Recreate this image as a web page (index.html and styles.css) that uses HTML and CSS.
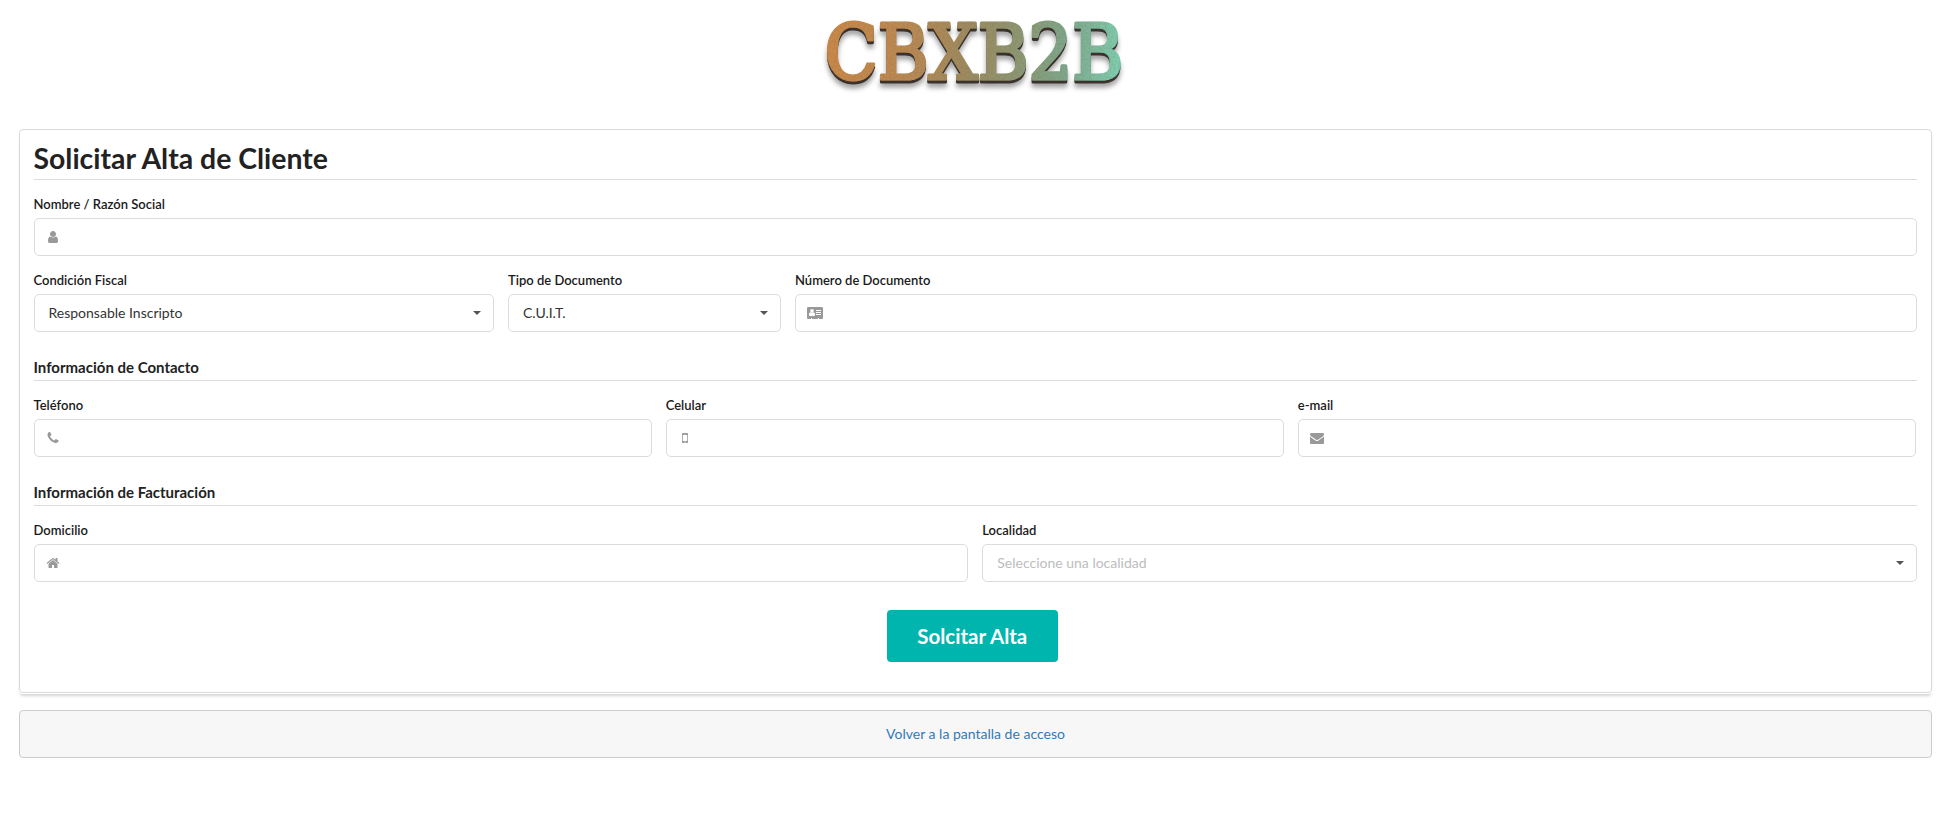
FILE: index.html
```html
<!DOCTYPE html>
<html lang="es">
<head>
<meta charset="utf-8">
<title>Solicitar Alta de Cliente</title>
<link rel="stylesheet" href="styles.css">
</head>
<body>
<header class="brand">
  <svg class="logo" viewBox="0 0 340 100" width="340" height="100" role="img" aria-label="CBXB2B">
    <defs>
      <linearGradient id="metal" gradientUnits="userSpaceOnUse" x1="0" x2="325" y1="0" y2="30">
        <stop offset="0" stop-color="#cf8a45"/>
        <stop offset="0.3" stop-color="#bd8b52"/>
        <stop offset="0.48" stop-color="#a08c5e"/>
        <stop offset="0.66" stop-color="#8d9a74"/>
        <stop offset="0.82" stop-color="#7dab8e"/>
        <stop offset="1" stop-color="#7fd3b4"/>
      </linearGradient>
      <filter id="metal-fx" x="-5%" y="-10%" width="110%" height="135%">
        <feTurbulence type="fractalNoise" baseFrequency="0.45" numOctaves="3" seed="4" result="n"/>
        <feColorMatrix in="n" type="matrix" values="0 0 0 0 0.2  0 0 0 0 0.15  0 0 0 0 0.1  0 0 0 0.6 -0.16" result="m"/>
        <feComposite in="m" in2="SourceGraphic" operator="in" result="g"/>
        <feOffset in="SourceAlpha" dx="-0.5" dy="2.5" result="o1"/>
        <feFlood flood-color="#3a322e" result="c1"/>
        <feComposite in="c1" in2="o1" operator="in" result="edge"/>
        <feOffset in="SourceAlpha" dy="7" result="o2"/>
        <feGaussianBlur in="o2" stdDeviation="2.5" result="b2"/>
        <feFlood flood-color="#000" flood-opacity=".38" result="c2"/>
        <feComposite in="c2" in2="b2" operator="in" result="shadow"/>
        <feMerge>
          <feMergeNode in="shadow"/>
          <feMergeNode in="edge"/>
          <feMergeNode in="SourceGraphic"/>
          <feMergeNode in="g"/>
        </feMerge>
      </filter>
    </defs>
    <g filter="url(#metal-fx)">
      <g transform="translate(19.500 0) scale(.92 1)">
        <text class="logo-text" x="0" y="78" textLength="325" lengthAdjust="spacing" fill="url(#metal)" stroke="url(#metal)" stroke-width="3.2" stroke-linejoin="round">CBXB2B</text>
      </g>
    </g>
  </svg>
</header>

<main class="page">
  <section class="card">
    <h1 class="title">Solicitar Alta de Cliente</h1>
    <form class="form">
      <div class="field">
        <label class="label">Nombre / Razón Social</label>
        <div class="control">
          <input class="input" type="text">
          <span class="icon"><svg viewBox="0 0 1792 1792" width="14" height="14"><path d="M1536 1399q0 109-62.5 187t-150.5 78h-854q-88 0-150.5-78t-62.5-187q0-85 8.5-160.5t31.5-152 58.5-131 94-89 134.5-34.5q131 128 313 128t313-128q76 0 134.5 34.5t94 89 58.5 131 31.5 152 8.5 160.5zm-256-887q0 159-112.5 271.5t-271.5 112.5-271.5-112.5-112.5-271.5 112.5-271.5 271.5-112.5 271.5 112.5 112.5 271.5z"/></svg></span>
        </div>
      </div>

      <div class="row row-fiscal">
        <div class="field">
          <label class="label">Condición Fiscal</label>
          <div class="control">
            <select class="input select"><option>Responsable Inscripto</option></select>
            <span class="caret"></span>
          </div>
        </div>
        <div class="field">
          <label class="label">Tipo de Documento</label>
          <div class="control">
            <select class="input select"><option>C.U.I.T.</option></select>
            <span class="caret"></span>
          </div>
        </div>
        <div class="field">
          <label class="label">Número de Documento</label>
          <div class="control">
            <input class="input" type="text">
            <span class="icon"><svg viewBox="0 0 2048 1792" width="16" height="14"><path d="M1024 1131q0-64-9-117.5t-29.5-103-60.5-78-97-28.5q-6 4-30 18t-37.5 21.5-35.5 17.5-43 14.5-42 4.5-42-4.5-43-14.5-35.5-17.5-37.5-21.5-30-18q-57 0-97 28.5t-60.5 78-29.5 103-9 117.5 37 106.5 91 42.5h512q54 0 91-42.5t37-106.5zm-157-520q0-94-66.5-160.5t-160.5-66.5-160.5 66.5-66.5 160.5 66.5 160.5 160.5 66.5 160.5-66.5 66.5-160.5zm925 509v-64q0-14-9-23t-23-9h-576q-14 0-23 9t-9 23v64q0 14 9 23t23 9h576q14 0 23-9t9-23zm0-260v-56q0-15-10.5-25.5t-25.5-10.5h-568q-15 0-25.5 10.5t-10.5 25.5v56q0 15 10.5 25.5t25.5 10.5h568q15 0 25.5-10.5t10.5-25.5zm0-252v-64q0-14-9-23t-23-9h-576q-14 0-23 9t-9 23v64q0 14 9 23t23 9h576q14 0 23-9t9-23zm256-320v1216q0 66-47 113t-113 47h-352v-96q0-14-9-23t-23-9h-64q-14 0-23 9t-9 23v96h-768v-96q0-14-9-23t-23-9h-64q-14 0-23 9t-9 23v96h-352q-66 0-113-47t-47-113v-1216q0-66 47-113t113-47h1728q66 0 113 47t47 113z"/></svg></span>
          </div>
        </div>
      </div>

      <h2 class="section">Información de Contacto</h2>
      <div class="row row-three">
        <div class="field">
          <label class="label">Teléfono</label>
          <div class="control">
            <input class="input" type="text">
            <span class="icon"><svg viewBox="0 0 1792 1792" width="14" height="14"><path d="M1600 1240q0 27-10 70.5t-21 68.5q-21 50-122 106-94 51-186 51-27 0-53-3.5t-57.5-12.5-47-14.5-55.5-20.5-49-18q-98-35-175-83-127-79-264-216t-216-264q-48-77-83-175-3-9-18-49t-20.5-55.5-14.5-47-12.5-57.5-3.5-53q0-92 51-186 56-101 106-122 25-11 68.5-21t70.5-10q14 0 21 3 18 6 53 76 11 19 30 54t35 63.5 31 53.5q3 4 17.5 25t21.5 35.5 7 28.5q0 20-28.5 50t-62 55-62 53-28.5 46q0 9 5 22.5t8.5 20.5 14 24 11.5 19q76 137 174 235t235 174q2 1 19 11.5t24 14 20.5 8.5 22.5 5q18 0 46-28.5t53-62 55-62 50-28.5q14 0 28.5 7t35.5 21.5 25 17.5q25 15 53.5 31t63.5 35 54 30q70 35 76 53 3 7 3 21z"/></svg></span>
          </div>
        </div>
        <div class="field">
          <label class="label">Celular</label>
          <div class="control">
            <input class="input" type="text">
            <span class="icon"><svg viewBox="0 0 768 1792" width="6" height="14"><path d="M464 1408q0-33-23.500-56.500t-56.500-23.500-56.500 23.500-23.500 56.500 23.500 56.500 56.500 23.500 56.500-23.500 23.500-56.500zm208-160v-704q0-13-9.500-22.500t-22.500-9.500h-512q-13 0-22.500 9.500t-9.500 22.500v704q0 13 9.500 22.500t22.500 9.500h512q13 0 22.500-9.500t9.500-22.500zm-192-848q0-16-16-16h-160q-16 0-16 16t16 16h160q16 0 16-16zm288-16v1024q0 52-38 90t-90 38h-512q-52 0-90-38t-38-90v-1024q0-52 38-90t90-38h512q52 0 90 38t38 90z"/></svg></span>
          </div>
        </div>
        <div class="field">
          <label class="label">e-mail</label>
          <div class="control">
            <input class="input" type="text">
            <span class="icon"><svg viewBox="0 0 1792 1792" width="14" height="14"><path d="M1792 710v794q0 66-47 113t-113 47h-1472q-66 0-113-47t-47-113v-794q44 49 101 87 362 246 497 345 57 42 92.5 65.500t94.500 48 110 24.500h2q51 0 110-24.500t94.500-48 92.500-65.500q170-123 498-345 57-39 100-87zm0-294q0 79-49 151t-122 123q-376 261-468 325-10 7-42.500 30.500t-54 38-52 32.500-57.500 27-50 9h-2q-23 0-50-9t-57.500-27-52-32.500-54-38-42.500-30.500q-91-64-262-182.500t-205-142.500q-62-42-117-115.500t-55-136.500q0-78 41.500-130t118.500-52h1472q65 0 112.500 47t47.500 113z"/></svg></span>
          </div>
        </div>
      </div>

      <h2 class="section">Información de Facturación</h2>
      <div class="row row-two">
        <div class="field">
          <label class="label">Domicilio</label>
          <div class="control">
            <input class="input" type="text">
            <span class="icon"><svg viewBox="0 0 1792 1792" width="14" height="14"><path d="M1472 992v480q0 26-19 45t-45 19h-384v-384h-256v384h-384q-26 0-45-19t-19-45v-480q0-1 .5-3t.5-3l575-474 575 474q1 2 1 6zm223-69l-62 74q-8 9-21 11h-3q-13 0-21-7l-692-577-692 577q-12 8-24 7-13-2-21-11l-62-74q-8-10-7-23.500t11-21.500l719-599q32-26 76-26t76 26l244 204v-195q0-14 9-23t23-9h192q14 0 23 9t9 23v408l219 182q10 8 11 21.500t-7 23.500z"/></svg></span>
          </div>
        </div>
        <div class="field">
          <label class="label">Localidad</label>
          <div class="control">
            <select class="input select select-empty"><option>Seleccione una localidad</option></select>
            <span class="caret"></span>
          </div>
        </div>
      </div>

      <div class="actions">
        <button class="submit" type="button">Solcitar Alta</button>
      </div>
    </form>
  </section>

  <footer class="back">
    <a class="back-link" href="#">Volver a la pantalla de acceso</a>
  </footer>
</main>
</body>
</html>
```
FILE: styles.css
```css
* { box-sizing: border-box; }

html, body {
  margin: 0;
  padding: 0;
  background: #fff;
}

body {
  font-family: "Lato", "Liberation Sans", sans-serif;
  color: #1a1a1a;
  font-size: 14px;
  line-height: 20px;
}

.brand {
  height: 129px;
  display: flex;
  justify-content: center;
  padding-top: 1px;
}

.logo { display: block; }

.logo-text {
  font-family: "DejaVu Serif", "Liberation Serif", serif;
  font-weight: 400;
  font-size: 76px;
}

.page { padding: 0 17px 0 19px; }

.card {
  border: 1px solid #d9d9d9;
  border-radius: 4px;
  padding: 14px 14px 0 13.5px;
  height: 564px;
  background: #fff;
  box-shadow: 0 1px 0 #fff, 0 4px 3px -1px #d5d5d5;
}

.title {
  margin: 0 0 14px;
  padding-bottom: 6px;
  height: 36px;
  border-bottom: 1px solid #ddd;
  font-size: 28.4px;
  line-height: 28px;
  font-weight: 700;
  color: #222;
}

.form { display: block; }

.row { display: grid; column-gap: 14px; }
.row-fiscal { grid-template-columns: 460px 272.5px 1fr; column-gap: 14.5px; margin-top: 14px; }
.row-three { grid-template-columns: repeat(3, 1fr); padding-right: 1px; }
.row-two { grid-template-columns: repeat(2, 1fr); }

.label {
  display: block;
  height: 24px;
  font-size: 13px;
  line-height: 20px;
  font-weight: 600;
  color: #1a1a1a;
}

.control { position: relative; height: 38px; }

.input {
  display: block;
  width: 100%;
  height: 38px;
  margin: 0;
  padding: 0 14px;
  border: 1px solid #dcdcdc;
  border-radius: 5px;
  background: #fff;
  font-family: inherit;
  font-size: 14px;
  color: #333;
  outline: none;
}

.select {
  appearance: none;
  -webkit-appearance: none;
  padding-bottom: 2px;
}

.select-empty { color: #bdbdbd; }

.icon {
  position: absolute;
  left: 0;
  top: 0;
  width: 39px;
  height: 38px;
  display: flex;
  align-items: center;
  justify-content: center;
}

.icon svg { display: block; fill: #999; }

.caret {
  position: absolute;
  right: 13px;
  top: 17px;
  width: 0;
  height: 0;
  border-left: 4px solid transparent;
  border-right: 4px solid transparent;
  border-top: 4px solid #555;
}

.section {
  margin: 24px 0 14px;
  height: 25px;
  padding-bottom: 3px;
  border-bottom: 1px solid #ddd;
  font-size: 15px;
  line-height: 22px;
  font-weight: 700;
  color: #222;
}

.actions {
  display: flex;
  justify-content: center;
  margin-top: 28px;
}

.submit {
  width: 171px;
  height: 52px;
  margin-right: 6px;
  border: 0;
  border-radius: 4px;
  background: #00b5ad;
  color: #fff;
  font-family: inherit;
  font-size: 20.5px;
  font-weight: 700;
}

.back {
  margin-top: 17px;
  height: 48px;
  display: flex;
  align-items: center;
  justify-content: center;
  border: 1px solid #ccc;
  border-radius: 4px;
  background: #f7f7f7;
}

.back-link {
  font-size: 14px;
  color: #337ab7;
  text-decoration: none;
}
```
